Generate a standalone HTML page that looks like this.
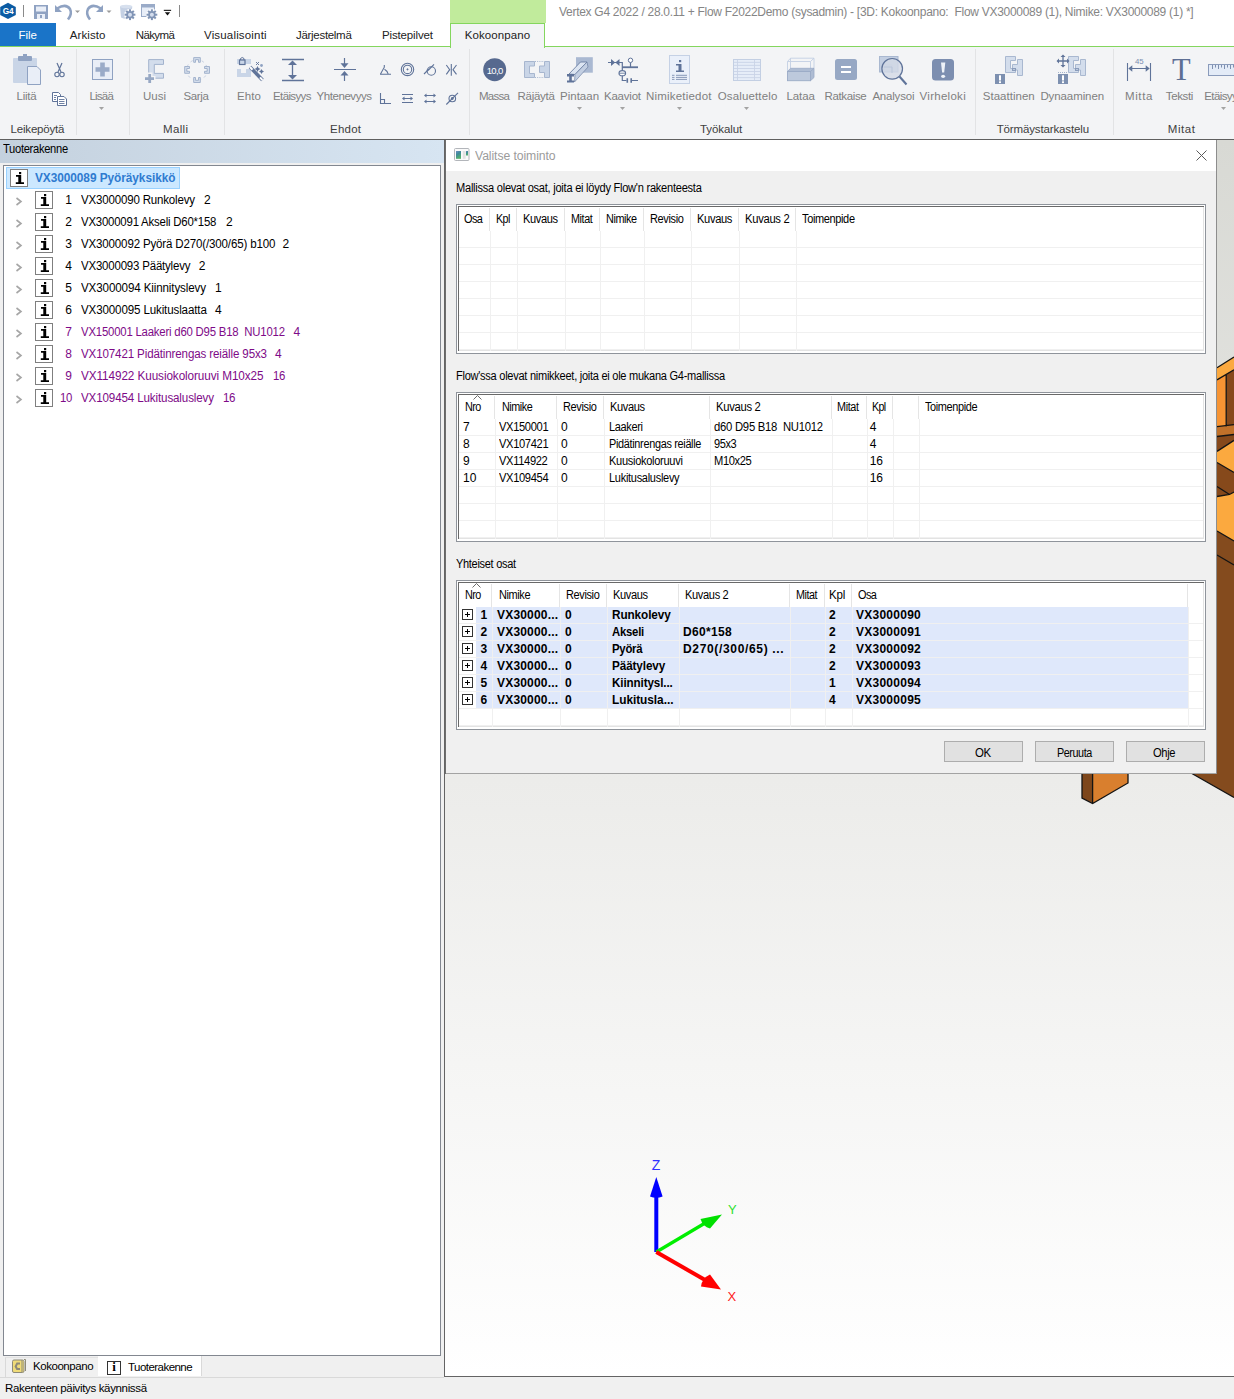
<!DOCTYPE html><html><head><meta charset="utf-8"><style>
html,body{margin:0;padding:0;}
body{width:1234px;height:1399px;position:relative;overflow:hidden;background:#f0f0f0;font-family:"Liberation Sans",sans-serif;}
svg{overflow:visible}
</style></head><body>
<div style="position:absolute;left:0px;top:0px;width:1234px;height:23px;background:#ffffff;"></div>
<div style="position:absolute;left:450px;top:0px;width:96px;height:23px;background:#c1eb9c;"></div>
<div style="position:absolute;left:559.00px;top:5.72px;font-size:12px;line-height:1;white-space:pre;color:#858585;letter-spacing:-0.286px;">Vertex G4 2022 / 28.0.11 + Flow F2022Demo (sysadmin) - [3D: Kokoonpano:  Flow VX3000089 (1), Nimike: VX3000089 (1) *]</div>
<div style="position:absolute;left:0px;top:23px;width:1234px;height:24px;background:#ffffff;"></div>
<div style="position:absolute;left:0px;top:23px;width:56px;height:23px;background:#1a74c8;"></div>
<div style="position:absolute;left:0px;top:46px;width:1234px;height:93px;background:#f3f4f6;"></div>
<div style="position:absolute;left:0px;top:46px;width:450px;height:1px;background:#84d65e;"></div>
<div style="position:absolute;left:545px;top:46px;width:689px;height:1px;background:#84d65e;"></div>
<div style="position:absolute;left:450px;top:23px;width:93px;height:24px;border:1px solid #84d65e;border-bottom:none;background:#f3f4f6;"></div>
<div style="position:absolute;left:0px;top:139px;width:1234px;height:1px;background:#5f5f5f;"></div>
<div style="position:absolute;left:18.60px;top:30.24px;font-size:11.5px;line-height:1;white-space:pre;color:#ffffff;letter-spacing:-0.049px;">File</div>
<div style="position:absolute;left:69.80px;top:30.24px;font-size:11.5px;line-height:1;white-space:pre;color:#222;letter-spacing:0.093px;">Arkisto</div>
<div style="position:absolute;left:135.70px;top:30.24px;font-size:11.5px;line-height:1;white-space:pre;color:#222;letter-spacing:-0.597px;">Näkymä</div>
<div style="position:absolute;left:204.00px;top:30.24px;font-size:11.5px;line-height:1;white-space:pre;color:#222;letter-spacing:0.172px;">Visualisointi</div>
<div style="position:absolute;left:296.00px;top:30.24px;font-size:11.5px;line-height:1;white-space:pre;color:#222;letter-spacing:-0.300px;">Järjestelmä</div>
<div style="position:absolute;left:382.00px;top:30.24px;font-size:11.5px;line-height:1;white-space:pre;color:#222;letter-spacing:-0.141px;">Pistepilvet</div>
<div style="position:absolute;left:464.80px;top:30.24px;font-size:11.5px;line-height:1;white-space:pre;color:#222;letter-spacing:0.073px;">Kokoonpano</div>
<div style="position:absolute;left:16.50px;top:91.04px;font-size:11.5px;line-height:1;white-space:pre;color:#808080;letter-spacing:-0.252px;">Liitä</div>
<div style="position:absolute;left:89.50px;top:91.04px;font-size:11.5px;line-height:1;white-space:pre;color:#808080;letter-spacing:-0.800px;">Lisää</div>
<div style="position:absolute;left:143.00px;top:91.04px;font-size:11.5px;line-height:1;white-space:pre;color:#808080;letter-spacing:-0.005px;">Uusi</div>
<div style="position:absolute;left:183.40px;top:91.04px;font-size:11.5px;line-height:1;white-space:pre;color:#808080;letter-spacing:-0.315px;">Sarja</div>
<div style="position:absolute;left:237.00px;top:91.04px;font-size:11.5px;line-height:1;white-space:pre;color:#808080;letter-spacing:0.120px;">Ehto</div>
<div style="position:absolute;left:273.00px;top:91.04px;font-size:11.5px;line-height:1;white-space:pre;color:#808080;letter-spacing:-0.616px;">Etäisyys</div>
<div style="position:absolute;left:316.60px;top:91.04px;font-size:11.5px;line-height:1;white-space:pre;color:#808080;letter-spacing:-0.447px;">Yhtenevyys</div>
<div style="position:absolute;left:479.00px;top:91.04px;font-size:11.5px;line-height:1;white-space:pre;color:#808080;letter-spacing:-0.719px;">Massa</div>
<div style="position:absolute;left:517.60px;top:91.04px;font-size:11.5px;line-height:1;white-space:pre;color:#808080;letter-spacing:-0.300px;">Räjäytä</div>
<div style="position:absolute;left:560.00px;top:91.04px;font-size:11.5px;line-height:1;white-space:pre;color:#808080;letter-spacing:0.003px;">Pintaan</div>
<div style="position:absolute;left:604.00px;top:91.04px;font-size:11.5px;line-height:1;white-space:pre;color:#808080;letter-spacing:-0.224px;">Kaaviot</div>
<div style="position:absolute;left:646.00px;top:91.04px;font-size:11.5px;line-height:1;white-space:pre;color:#808080;letter-spacing:0.203px;">Nimiketiedot</div>
<div style="position:absolute;left:717.70px;top:91.04px;font-size:11.5px;line-height:1;white-space:pre;color:#808080;letter-spacing:0.146px;">Osaluettelo</div>
<div style="position:absolute;left:786.50px;top:91.04px;font-size:11.5px;line-height:1;white-space:pre;color:#808080;letter-spacing:-0.116px;">Lataa</div>
<div style="position:absolute;left:824.60px;top:91.04px;font-size:11.5px;line-height:1;white-space:pre;color:#808080;letter-spacing:-0.376px;">Ratkaise</div>
<div style="position:absolute;left:872.40px;top:91.04px;font-size:11.5px;line-height:1;white-space:pre;color:#808080;letter-spacing:-0.196px;">Analysoi</div>
<div style="position:absolute;left:919.60px;top:91.04px;font-size:11.5px;line-height:1;white-space:pre;color:#808080;letter-spacing:0.274px;">Virheloki</div>
<div style="position:absolute;left:982.80px;top:91.04px;font-size:11.5px;line-height:1;white-space:pre;color:#808080;letter-spacing:0.017px;">Staattinen</div>
<div style="position:absolute;left:1040.40px;top:91.04px;font-size:11.5px;line-height:1;white-space:pre;color:#808080;letter-spacing:-0.094px;">Dynaaminen</div>
<div style="position:absolute;left:1125.00px;top:91.04px;font-size:11.5px;line-height:1;white-space:pre;color:#808080;letter-spacing:0.620px;">Mitta</div>
<div style="position:absolute;left:1165.80px;top:91.04px;font-size:11.5px;line-height:1;white-space:pre;color:#808080;letter-spacing:-0.371px;">Teksti</div>
<div style="position:absolute;left:1204.30px;top:91.04px;font-size:11.5px;line-height:1;white-space:pre;color:#808080;letter-spacing:-0.616px;">Etäisyys</div>
<div style="position:absolute;left:10.50px;top:124.24px;font-size:11.5px;line-height:1;white-space:pre;color:#404040;letter-spacing:-0.179px;">Leikepöytä</div>
<div style="position:absolute;left:163.00px;top:124.24px;font-size:11.5px;line-height:1;white-space:pre;color:#404040;letter-spacing:0.336px;">Malli</div>
<div style="position:absolute;left:330.00px;top:124.24px;font-size:11.5px;line-height:1;white-space:pre;color:#404040;letter-spacing:0.242px;">Ehdot</div>
<div style="position:absolute;left:700.00px;top:124.24px;font-size:11.5px;line-height:1;white-space:pre;color:#404040;letter-spacing:-0.077px;">Työkalut</div>
<div style="position:absolute;left:996.70px;top:124.24px;font-size:11.5px;line-height:1;white-space:pre;color:#404040;letter-spacing:-0.140px;">Törmäystarkastelu</div>
<div style="position:absolute;left:1167.80px;top:124.24px;font-size:11.5px;line-height:1;white-space:pre;color:#404040;letter-spacing:0.573px;">Mitat</div>
<div style="position:absolute;left:76px;top:49px;width:1px;height:86px;background:#e2e3e5;"></div>
<div style="position:absolute;left:129px;top:49px;width:1px;height:86px;background:#e2e3e5;"></div>
<div style="position:absolute;left:224px;top:49px;width:1px;height:86px;background:#e2e3e5;"></div>
<div style="position:absolute;left:469px;top:49px;width:1px;height:86px;background:#e2e3e5;"></div>
<div style="position:absolute;left:975px;top:49px;width:1px;height:86px;background:#e2e3e5;"></div>
<div style="position:absolute;left:1113px;top:49px;width:1px;height:86px;background:#e2e3e5;"></div>
<svg style="position:absolute;left:99.0px;top:107px;" width="5" height="3" viewBox="0 0 5 3"><path d="M0 0H5L2.5 3Z" fill="#a3a3a3"/></svg>
<svg style="position:absolute;left:577.0px;top:107px;" width="5" height="3" viewBox="0 0 5 3"><path d="M0 0H5L2.5 3Z" fill="#a3a3a3"/></svg>
<svg style="position:absolute;left:619.5px;top:107px;" width="5" height="3" viewBox="0 0 5 3"><path d="M0 0H5L2.5 3Z" fill="#a3a3a3"/></svg>
<svg style="position:absolute;left:676.5px;top:107px;" width="5" height="3" viewBox="0 0 5 3"><path d="M0 0H5L2.5 3Z" fill="#a3a3a3"/></svg>
<svg style="position:absolute;left:743.5px;top:107px;" width="5" height="3" viewBox="0 0 5 3"><path d="M0 0H5L2.5 3Z" fill="#a3a3a3"/></svg>
<svg style="position:absolute;left:1221.0px;top:107px;" width="5" height="3" viewBox="0 0 5 3"><path d="M0 0H5L2.5 3Z" fill="#a3a3a3"/></svg>
<div style="position:absolute;left:0;top:140px;width:444px;height:23px;background:linear-gradient(to right,#c4d1de,#d7e5f2);"></div>
<div style="position:absolute;left:3.00px;top:142.62px;font-size:12px;line-height:1;white-space:pre;color:#000;letter-spacing:-0.322px;transform:scaleX(0.9292);transform-origin:0 0;">Tuoterakenne</div>
<div style="position:absolute;left:3px;top:165px;width:436px;height:1189px;border:1px solid #828790;background:#fff;"></div>
<div style="position:absolute;left:6px;top:167px;width:172px;height:20px;border:1px solid #99d1ff;background:#cce8ff;"></div>
<svg style="position:absolute;left:10px;top:169px;" width="18" height="18" viewBox="0 0 18 18"><rect x="0.5" y="0.5" width="17" height="17" fill="#fff" stroke="#7f7f7f"/><rect x="9" y="3" width="2.2" height="2.2" fill="#000"/><path d="M6 6H11.2V13.2H14V15H5.8V13.2H8.3V7.7H6Z" fill="#000"/></svg>
<div style="position:absolute;left:35.40px;top:171.62px;font-size:12px;line-height:1;white-space:pre;color:#2f7bd0;font-weight:bold;letter-spacing:-0.057px;transform:scaleX(0.9874);transform-origin:0 0;">VX3000089 Pyöräyksikkö</div>
<svg style="position:absolute;left:15px;top:197px;" width="8" height="10" viewBox="0 0 8 10"><path d="M1.5 1L6 4.5L1.5 8" fill="none" stroke="#a6a6a6" stroke-width="1.6"/></svg>
<svg style="position:absolute;left:35px;top:191px;" width="18" height="18" viewBox="0 0 18 18"><rect x="0.5" y="0.5" width="17" height="17" fill="#fff" stroke="#7f7f7f"/><rect x="9" y="3" width="2.2" height="2.2" fill="#000"/><path d="M6 6H11.2V13.2H14V15H5.8V13.2H8.3V7.7H6Z" fill="#000"/></svg>
<div style="position:absolute;left:65.13px;top:194.12px;font-size:12px;line-height:1;white-space:pre;color:#000;">1</div>
<div style="position:absolute;left:81.00px;top:194.12px;font-size:12px;line-height:1;white-space:pre;color:#000;letter-spacing:-0.183px;transform:scaleX(0.9598);transform-origin:0 0;">VX3000090 Runkolevy</div>
<div style="position:absolute;left:204.00px;top:194.12px;font-size:12px;line-height:1;white-space:pre;color:#000;">2</div>
<svg style="position:absolute;left:15px;top:219px;" width="8" height="10" viewBox="0 0 8 10"><path d="M1.5 1L6 4.5L1.5 8" fill="none" stroke="#a6a6a6" stroke-width="1.6"/></svg>
<svg style="position:absolute;left:35px;top:213px;" width="18" height="18" viewBox="0 0 18 18"><rect x="0.5" y="0.5" width="17" height="17" fill="#fff" stroke="#7f7f7f"/><rect x="9" y="3" width="2.2" height="2.2" fill="#000"/><path d="M6 6H11.2V13.2H14V15H5.8V13.2H8.3V7.7H6Z" fill="#000"/></svg>
<div style="position:absolute;left:65.13px;top:216.12px;font-size:12px;line-height:1;white-space:pre;color:#000;">2</div>
<div style="position:absolute;left:81.00px;top:216.12px;font-size:12px;line-height:1;white-space:pre;color:#000;letter-spacing:-0.215px;transform:scaleX(0.9503);transform-origin:0 0;">VX3000091 Akseli D60*158</div>
<div style="position:absolute;left:226.00px;top:216.12px;font-size:12px;line-height:1;white-space:pre;color:#000;">2</div>
<svg style="position:absolute;left:15px;top:241px;" width="8" height="10" viewBox="0 0 8 10"><path d="M1.5 1L6 4.5L1.5 8" fill="none" stroke="#a6a6a6" stroke-width="1.6"/></svg>
<svg style="position:absolute;left:35px;top:235px;" width="18" height="18" viewBox="0 0 18 18"><rect x="0.5" y="0.5" width="17" height="17" fill="#fff" stroke="#7f7f7f"/><rect x="9" y="3" width="2.2" height="2.2" fill="#000"/><path d="M6 6H11.2V13.2H14V15H5.8V13.2H8.3V7.7H6Z" fill="#000"/></svg>
<div style="position:absolute;left:65.13px;top:238.12px;font-size:12px;line-height:1;white-space:pre;color:#000;">3</div>
<div style="position:absolute;left:81.00px;top:238.12px;font-size:12px;line-height:1;white-space:pre;color:#000;letter-spacing:-0.162px;transform:scaleX(0.9615);transform-origin:0 0;">VX3000092 Pyörä D270(/300/65) b100</div>
<div style="position:absolute;left:282.60px;top:238.12px;font-size:12px;line-height:1;white-space:pre;color:#000;">2</div>
<svg style="position:absolute;left:15px;top:263px;" width="8" height="10" viewBox="0 0 8 10"><path d="M1.5 1L6 4.5L1.5 8" fill="none" stroke="#a6a6a6" stroke-width="1.6"/></svg>
<svg style="position:absolute;left:35px;top:257px;" width="18" height="18" viewBox="0 0 18 18"><rect x="0.5" y="0.5" width="17" height="17" fill="#fff" stroke="#7f7f7f"/><rect x="9" y="3" width="2.2" height="2.2" fill="#000"/><path d="M6 6H11.2V13.2H14V15H5.8V13.2H8.3V7.7H6Z" fill="#000"/></svg>
<div style="position:absolute;left:65.13px;top:260.12px;font-size:12px;line-height:1;white-space:pre;color:#000;">4</div>
<div style="position:absolute;left:81.00px;top:260.12px;font-size:12px;line-height:1;white-space:pre;color:#000;letter-spacing:-0.197px;transform:scaleX(0.9554);transform-origin:0 0;">VX3000093 Päätylevy</div>
<div style="position:absolute;left:198.80px;top:260.12px;font-size:12px;line-height:1;white-space:pre;color:#000;">2</div>
<svg style="position:absolute;left:15px;top:285px;" width="8" height="10" viewBox="0 0 8 10"><path d="M1.5 1L6 4.5L1.5 8" fill="none" stroke="#a6a6a6" stroke-width="1.6"/></svg>
<svg style="position:absolute;left:35px;top:279px;" width="18" height="18" viewBox="0 0 18 18"><rect x="0.5" y="0.5" width="17" height="17" fill="#fff" stroke="#7f7f7f"/><rect x="9" y="3" width="2.2" height="2.2" fill="#000"/><path d="M6 6H11.2V13.2H14V15H5.8V13.2H8.3V7.7H6Z" fill="#000"/></svg>
<div style="position:absolute;left:65.13px;top:282.12px;font-size:12px;line-height:1;white-space:pre;color:#000;">5</div>
<div style="position:absolute;left:81.00px;top:282.12px;font-size:12px;line-height:1;white-space:pre;color:#000;letter-spacing:-0.131px;transform:scaleX(0.9676);transform-origin:0 0;">VX3000094 Kiinnityslevy</div>
<div style="position:absolute;left:215.00px;top:282.12px;font-size:12px;line-height:1;white-space:pre;color:#000;">1</div>
<svg style="position:absolute;left:15px;top:307px;" width="8" height="10" viewBox="0 0 8 10"><path d="M1.5 1L6 4.5L1.5 8" fill="none" stroke="#a6a6a6" stroke-width="1.6"/></svg>
<svg style="position:absolute;left:35px;top:301px;" width="18" height="18" viewBox="0 0 18 18"><rect x="0.5" y="0.5" width="17" height="17" fill="#fff" stroke="#7f7f7f"/><rect x="9" y="3" width="2.2" height="2.2" fill="#000"/><path d="M6 6H11.2V13.2H14V15H5.8V13.2H8.3V7.7H6Z" fill="#000"/></svg>
<div style="position:absolute;left:65.13px;top:304.12px;font-size:12px;line-height:1;white-space:pre;color:#000;">6</div>
<div style="position:absolute;left:81.00px;top:304.12px;font-size:12px;line-height:1;white-space:pre;color:#000;letter-spacing:-0.141px;transform:scaleX(0.9654);transform-origin:0 0;">VX3000095 Lukituslaatta</div>
<div style="position:absolute;left:215.00px;top:304.12px;font-size:12px;line-height:1;white-space:pre;color:#000;">4</div>
<svg style="position:absolute;left:15px;top:329px;" width="8" height="10" viewBox="0 0 8 10"><path d="M1.5 1L6 4.5L1.5 8" fill="none" stroke="#a6a6a6" stroke-width="1.6"/></svg>
<svg style="position:absolute;left:35px;top:323px;" width="18" height="18" viewBox="0 0 18 18"><rect x="0.5" y="0.5" width="17" height="17" fill="#fff" stroke="#7f7f7f"/><rect x="9" y="3" width="2.2" height="2.2" fill="#000"/><path d="M6 6H11.2V13.2H14V15H5.8V13.2H8.3V7.7H6Z" fill="#000"/></svg>
<div style="position:absolute;left:65.13px;top:326.12px;font-size:12px;line-height:1;white-space:pre;color:#7e0a88;">7</div>
<div style="position:absolute;left:81.00px;top:326.12px;font-size:12px;line-height:1;white-space:pre;color:#7e0a88;letter-spacing:-0.220px;transform:scaleX(0.9486);transform-origin:0 0;">VX150001 Laakeri d60 D95 B18  NU1012</div>
<div style="position:absolute;left:293.60px;top:326.12px;font-size:12px;line-height:1;white-space:pre;color:#7e0a88;">4</div>
<svg style="position:absolute;left:15px;top:351px;" width="8" height="10" viewBox="0 0 8 10"><path d="M1.5 1L6 4.5L1.5 8" fill="none" stroke="#a6a6a6" stroke-width="1.6"/></svg>
<svg style="position:absolute;left:35px;top:345px;" width="18" height="18" viewBox="0 0 18 18"><rect x="0.5" y="0.5" width="17" height="17" fill="#fff" stroke="#7f7f7f"/><rect x="9" y="3" width="2.2" height="2.2" fill="#000"/><path d="M6 6H11.2V13.2H14V15H5.8V13.2H8.3V7.7H6Z" fill="#000"/></svg>
<div style="position:absolute;left:65.13px;top:348.12px;font-size:12px;line-height:1;white-space:pre;color:#7e0a88;">8</div>
<div style="position:absolute;left:81.00px;top:348.12px;font-size:12px;line-height:1;white-space:pre;color:#7e0a88;letter-spacing:-0.137px;transform:scaleX(0.9648);transform-origin:0 0;">VX107421 Pidätinrengas reiälle 95x3</div>
<div style="position:absolute;left:275.00px;top:348.12px;font-size:12px;line-height:1;white-space:pre;color:#7e0a88;">4</div>
<svg style="position:absolute;left:15px;top:373px;" width="8" height="10" viewBox="0 0 8 10"><path d="M1.5 1L6 4.5L1.5 8" fill="none" stroke="#a6a6a6" stroke-width="1.6"/></svg>
<svg style="position:absolute;left:35px;top:367px;" width="18" height="18" viewBox="0 0 18 18"><rect x="0.5" y="0.5" width="17" height="17" fill="#fff" stroke="#7f7f7f"/><rect x="9" y="3" width="2.2" height="2.2" fill="#000"/><path d="M6 6H11.2V13.2H14V15H5.8V13.2H8.3V7.7H6Z" fill="#000"/></svg>
<div style="position:absolute;left:65.13px;top:370.12px;font-size:12px;line-height:1;white-space:pre;color:#7e0a88;">9</div>
<div style="position:absolute;left:81.00px;top:370.12px;font-size:12px;line-height:1;white-space:pre;color:#7e0a88;letter-spacing:-0.090px;transform:scaleX(0.9788);transform-origin:0 0;">VX114922 Kuusiokoloruuvi M10x25</div>
<div style="position:absolute;left:272.80px;top:370.12px;font-size:12px;line-height:1;white-space:pre;color:#7e0a88;letter-spacing:-0.470px;transform:scaleX(0.9477);transform-origin:0 0;">16</div>
<svg style="position:absolute;left:15px;top:395px;" width="8" height="10" viewBox="0 0 8 10"><path d="M1.5 1L6 4.5L1.5 8" fill="none" stroke="#a6a6a6" stroke-width="1.6"/></svg>
<svg style="position:absolute;left:35px;top:389px;" width="18" height="18" viewBox="0 0 18 18"><rect x="0.5" y="0.5" width="17" height="17" fill="#fff" stroke="#7f7f7f"/><rect x="9" y="3" width="2.2" height="2.2" fill="#000"/><path d="M6 6H11.2V13.2H14V15H5.8V13.2H8.3V7.7H6Z" fill="#000"/></svg>
<div style="position:absolute;left:60.00px;top:392.12px;font-size:12px;line-height:1;white-space:pre;color:#7e0a88;letter-spacing:-0.470px;transform:scaleX(0.9477);transform-origin:0 0;">10</div>
<div style="position:absolute;left:81.00px;top:392.12px;font-size:12px;line-height:1;white-space:pre;color:#7e0a88;letter-spacing:-0.137px;transform:scaleX(0.9667);transform-origin:0 0;">VX109454 Lukitusaluslevy</div>
<div style="position:absolute;left:222.50px;top:392.12px;font-size:12px;line-height:1;white-space:pre;color:#7e0a88;letter-spacing:-0.344px;transform:scaleX(0.9616);transform-origin:0 0;">16</div>
<div style="position:absolute;left:0px;top:1356px;width:444px;height:21px;background:#f0f0f0;"></div>
<div style="position:absolute;left:5px;top:1357px;width:92px;height:19px;border-left:1px solid #d9d9d9;border-top:1px solid #e3e3e3;background:#f0f0f0;"></div>
<div style="position:absolute;left:98px;top:1356px;width:103px;height:20px;border-right:1px solid #d9d9d9;background:#fff;"></div>
<svg style="position:absolute;left:12px;top:1359px;" width="14" height="14" viewBox="0 0 14 14"><rect x="0.5" y="1" width="11.5" height="12.5" rx="1.5" fill="#efdb78" stroke="#8d8a78"/><path d="M10 1V13" stroke="#8d8a78"/><path d="M12 0.5H13.5V12" fill="none" stroke="#8d8a78"/><path d="M8 3.5H4.5L2.5 7.5L4.5 11H8V9H5.8L4.8 7.5L5.8 5.5H8Z" fill="#8d8a78"/></svg>
<div style="position:absolute;left:33.00px;top:1360.84px;font-size:11.5px;line-height:1;white-space:pre;color:#000;letter-spacing:-0.450px;">Kokoonpano</div>
<div style="position:absolute;left:107px;top:1361px;width:12px;height:12px;border:1px solid #333;background:#fff;"></div>
<div style="position:absolute;left:107px;top:1360px;width:14px;text-align:center;font:bold 13px/1 'Liberation Serif';color:#000;">i</div>
<div style="position:absolute;left:128.00px;top:1362.34px;font-size:11.5px;line-height:1;white-space:pre;color:#000;letter-spacing:-0.538px;">Tuoterakenne</div>
<div style="position:absolute;left:0px;top:1377px;width:444px;height:1px;background:#d9d9d9;"></div>
<div style="position:absolute;left:5.00px;top:1382.94px;font-size:11.5px;line-height:1;white-space:pre;color:#000;letter-spacing:-0.350px;">Rakenteen päivitys käynnissä</div>
<div style="position:absolute;left:444px;top:140px;width:790px;height:1236px;border-left:1px solid #646464;border-bottom:1px solid #646464;background:linear-gradient(to bottom,#d8d9d4 0px,#ececea 640px,#ffffff 1236px);"></div>
<svg style="position:absolute;left:0;top:0" width="1234" height="1399" viewBox="0 0 1234 1399"><polygon points="1217,367.7 1234,357 1234,369.7 1217,379.9" fill="#fba93f"/><polygon points="1217,379.9 1226.2,374.2 1226.2,426.4 1217,426.6" fill="#f79433"/><polygon points="1226.2,374.2 1234,369.7 1234,424.7 1226.2,426.4" fill="#86491b"/><polygon points="1217,426.6 1234,424.7 1234,434.5 1217,436.5" fill="#c0712a"/><polygon points="1217,436.5 1234,434.5 1234,440.4 1217,451.4" fill="#86491b"/><polygon points="1217,451.4 1234,440.4 1234,472.5 1217,462.5" fill="#fba93f"/><polygon points="1217,462.5 1234,472.5 1234,492 1229.5,494.5 1217,496.5" fill="#86491b"/><polygon points="1217,496.5 1229.5,494.5 1234,492 1234,541 1217,531" fill="#fba93f"/><polygon points="1217,531 1234,541 1234,797.5 1191,773 1217,773" fill="#844b1e"/><polygon points="1082,773 1092.6,773 1092.6,803.5 1082,798" fill="#7d461b"/><polygon points="1092.6,773 1128,773 1128,783 1092.6,803.5" fill="#d97f2e"/><path d="M1217 367.7L1234 357M1217 379.9L1234 369.7M1226.2 374.2V426.4M1217 426.6L1234 424.7M1217 436.5L1234 434.5M1217 451.4L1234 440.4M1217 462.5L1234 472.5M1217 486.5L1229.5 494.5M1217 496.5L1229.5 494.5L1234 492M1217 531L1234 541M1217 555L1234 565M1191 773L1234 797.5M1082 773V798L1092.6 803.5L1128 783V773M1092.6 773V803.5" fill="none" stroke="#141414" stroke-width="1.3"/></svg>
<svg style="position:absolute;left:0;top:0" width="1234" height="1399" viewBox="0 0 1234 1399"><line x1="656.3" y1="1252" x2="656.3" y2="1196" stroke="#0000ff" stroke-width="4"/><path d="M656.3 1177L650 1196.5Q656.3 1199 662.6 1196.5Z" fill="#0000ff"/><line x1="656.3" y1="1252" x2="706" y2="1222.5" stroke="#00ee00" stroke-width="3.2"/><path d="M722 1214.5L700.5 1219Q703 1227 710 1228.5Z" fill="#00e000"/><line x1="656.3" y1="1252" x2="706" y2="1280.5" stroke="#ff0000" stroke-width="4"/><path d="M721 1289.5L710 1274.5Q702 1278 701 1286.5Z" fill="#ff0000"/></svg>
<div style="position:absolute;left:651.8px;top:1157.6px;font:14px/1 'Liberation Sans';color:#3030ff;">Z</div>
<div style="position:absolute;left:728px;top:1202.5px;font:13px/1 'Liberation Sans';color:#30e030;">Y</div>
<div style="position:absolute;left:727.5px;top:1289.5px;font:13px/1 'Liberation Sans';color:#ff2020;">X</div>
<div style="position:absolute;left:445px;top:140px;width:771px;height:31px;background:#ffffff;"></div>
<div style="position:absolute;left:445px;top:171px;width:771px;height:602px;background:#f0f0f0;"></div>
<div style="position:absolute;left:445px;top:773px;width:772px;height:1px;background:#a3a3a3;"></div>
<div style="position:absolute;left:1216px;top:140px;width:1px;height:634px;background:#8d8d8d;"></div>
<div style="position:absolute;left:445px;top:140px;width:1px;height:634px;background:#6e6e6e;"></div>
<svg style="position:absolute;left:454px;top:148px;" width="16" height="13" viewBox="0 0 16 13"><defs><linearGradient id="tg" x1="0" y1="0" x2="0.4" y2="1"><stop offset="0" stop-color="#6d8ec4"/><stop offset="0.45" stop-color="#3f8a98"/><stop offset="1" stop-color="#52b06a"/></linearGradient></defs><rect x="0.5" y="0.5" width="14.5" height="12" rx="1" fill="#fafafa" stroke="#b2b5ba"/><rect x="2" y="3" width="5" height="7.8" fill="url(#tg)"/><rect x="8.8" y="3" width="2.8" height="7.8" fill="#e2e2e2"/><rect x="12" y="3" width="2" height="4.5" fill="url(#tg)"/></svg>
<div style="position:absolute;left:475.00px;top:149.70px;font-size:12.5px;line-height:1;white-space:pre;color:#9b9b9b;letter-spacing:-0.088px;transform:scaleX(0.9768);transform-origin:0 0;">Valitse toiminto</div>
<svg style="position:absolute;left:1196px;top:150px;" width="11" height="11" viewBox="0 0 11 11"><path d="M0.5 0.5L10.5 10.5M10.5 0.5L0.5 10.5" stroke="#5a5a5a" stroke-width="1"/></svg>
<div style="position:absolute;left:456.20px;top:182.02px;font-size:12px;line-height:1;white-space:pre;color:#000;letter-spacing:-0.272px;transform:scaleX(0.9227);transform-origin:0 0;">Mallissa olevat osat, joita ei löydy Flow'n rakenteesta</div>
<div style="position:absolute;left:456.20px;top:370.22px;font-size:12px;line-height:1;white-space:pre;color:#000;letter-spacing:-0.292px;transform:scaleX(0.9203);transform-origin:0 0;">Flow'ssa olevat nimikkeet, joita ei ole mukana G4-mallissa</div>
<div style="position:absolute;left:456.20px;top:557.72px;font-size:12px;line-height:1;white-space:pre;color:#000;letter-spacing:-0.325px;transform:scaleX(0.9168);transform-origin:0 0;">Yhteiset osat</div>
<div style="position:absolute;left:456px;top:204px;width:748px;height:148px;border:1px solid #8f949b;background:#fff;"></div>
<div style="position:absolute;left:458px;top:206px;width:1px;height:145px;background:#696969;"></div>
<div style="position:absolute;left:458px;top:206px;width:746px;height:1px;background:#696969;"></div>
<div style="position:absolute;left:459px;top:350px;width:745px;height:1px;background:#e3e3e3;"></div>
<div style="position:absolute;left:1203px;top:207px;width:1px;height:144px;background:#e3e3e3;"></div>
<div style="position:absolute;left:489px;top:208px;width:1px;height:23px;background:#e5e5e5;"></div>
<div style="position:absolute;left:516px;top:208px;width:1px;height:23px;background:#e5e5e5;"></div>
<div style="position:absolute;left:564px;top:208px;width:1px;height:23px;background:#e5e5e5;"></div>
<div style="position:absolute;left:599px;top:208px;width:1px;height:23px;background:#e5e5e5;"></div>
<div style="position:absolute;left:643px;top:208px;width:1px;height:23px;background:#e5e5e5;"></div>
<div style="position:absolute;left:690px;top:208px;width:1px;height:23px;background:#e5e5e5;"></div>
<div style="position:absolute;left:738px;top:208px;width:1px;height:23px;background:#e5e5e5;"></div>
<div style="position:absolute;left:795px;top:208px;width:1px;height:23px;background:#e5e5e5;"></div>
<div style="position:absolute;left:490px;top:231px;width:1px;height:120px;background:#f0f0f0;"></div>
<div style="position:absolute;left:517px;top:231px;width:1px;height:120px;background:#f0f0f0;"></div>
<div style="position:absolute;left:565px;top:231px;width:1px;height:120px;background:#f0f0f0;"></div>
<div style="position:absolute;left:600px;top:231px;width:1px;height:120px;background:#f0f0f0;"></div>
<div style="position:absolute;left:644px;top:231px;width:1px;height:120px;background:#f0f0f0;"></div>
<div style="position:absolute;left:691px;top:231px;width:1px;height:120px;background:#f0f0f0;"></div>
<div style="position:absolute;left:739px;top:231px;width:1px;height:120px;background:#f0f0f0;"></div>
<div style="position:absolute;left:796px;top:231px;width:1px;height:120px;background:#f0f0f0;"></div>
<div style="position:absolute;left:459px;top:247px;width:744px;height:1px;background:#f0f0f0;"></div>
<div style="position:absolute;left:459px;top:264px;width:744px;height:1px;background:#f0f0f0;"></div>
<div style="position:absolute;left:459px;top:281px;width:744px;height:1px;background:#f0f0f0;"></div>
<div style="position:absolute;left:459px;top:298px;width:744px;height:1px;background:#f0f0f0;"></div>
<div style="position:absolute;left:459px;top:315px;width:744px;height:1px;background:#f0f0f0;"></div>
<div style="position:absolute;left:459px;top:332px;width:744px;height:1px;background:#f0f0f0;"></div>
<div style="position:absolute;left:459px;top:349px;width:744px;height:1px;background:#f0f0f0;"></div>
<div style="position:absolute;left:464.30px;top:213.12px;font-size:12px;line-height:1;white-space:pre;color:#000;letter-spacing:-0.674px;transform:scaleX(0.9096);transform-origin:0 0;">Osa</div>
<div style="position:absolute;left:496.00px;top:213.12px;font-size:12px;line-height:1;white-space:pre;color:#000;letter-spacing:-0.644px;transform:scaleX(0.8907);transform-origin:0 0;">Kpl</div>
<div style="position:absolute;left:523.30px;top:213.12px;font-size:12px;line-height:1;white-space:pre;color:#000;letter-spacing:-0.417px;transform:scaleX(0.9228);transform-origin:0 0;">Kuvaus</div>
<div style="position:absolute;left:571.30px;top:213.12px;font-size:12px;line-height:1;white-space:pre;color:#000;letter-spacing:-0.453px;transform:scaleX(0.8972);transform-origin:0 0;">Mitat</div>
<div style="position:absolute;left:606.00px;top:213.12px;font-size:12px;line-height:1;white-space:pre;color:#000;letter-spacing:-0.478px;transform:scaleX(0.9039);transform-origin:0 0;">Nimike</div>
<div style="position:absolute;left:650.00px;top:213.12px;font-size:12px;line-height:1;white-space:pre;color:#000;letter-spacing:-0.373px;transform:scaleX(0.9159);transform-origin:0 0;">Revisio</div>
<div style="position:absolute;left:697.00px;top:213.12px;font-size:12px;line-height:1;white-space:pre;color:#000;letter-spacing:-0.383px;transform:scaleX(0.9291);transform-origin:0 0;">Kuvaus</div>
<div style="position:absolute;left:745.30px;top:213.12px;font-size:12px;line-height:1;white-space:pre;color:#000;letter-spacing:-0.314px;transform:scaleX(0.9348);transform-origin:0 0;">Kuvaus 2</div>
<div style="position:absolute;left:802.00px;top:213.12px;font-size:12px;line-height:1;white-space:pre;color:#000;letter-spacing:-0.394px;transform:scaleX(0.9164);transform-origin:0 0;">Toimenpide</div>
<div style="position:absolute;left:456px;top:392px;width:748px;height:148px;border:1px solid #8f949b;background:#fff;"></div>
<div style="position:absolute;left:458px;top:394px;width:1px;height:145px;background:#696969;"></div>
<div style="position:absolute;left:458px;top:394px;width:746px;height:1px;background:#696969;"></div>
<div style="position:absolute;left:459px;top:538px;width:745px;height:1px;background:#e3e3e3;"></div>
<div style="position:absolute;left:1203px;top:395px;width:1px;height:144px;background:#e3e3e3;"></div>
<div style="position:absolute;left:494px;top:396px;width:1px;height:23px;background:#e5e5e5;"></div>
<div style="position:absolute;left:556px;top:396px;width:1px;height:23px;background:#e5e5e5;"></div>
<div style="position:absolute;left:603px;top:396px;width:1px;height:23px;background:#e5e5e5;"></div>
<div style="position:absolute;left:709px;top:396px;width:1px;height:23px;background:#e5e5e5;"></div>
<div style="position:absolute;left:831px;top:396px;width:1px;height:23px;background:#e5e5e5;"></div>
<div style="position:absolute;left:866px;top:396px;width:1px;height:23px;background:#e5e5e5;"></div>
<div style="position:absolute;left:892px;top:396px;width:1px;height:23px;background:#e5e5e5;"></div>
<div style="position:absolute;left:918px;top:396px;width:1px;height:23px;background:#e5e5e5;"></div>
<div style="position:absolute;left:495px;top:419px;width:1px;height:120px;background:#f0f0f0;"></div>
<div style="position:absolute;left:557px;top:419px;width:1px;height:120px;background:#f0f0f0;"></div>
<div style="position:absolute;left:604px;top:419px;width:1px;height:120px;background:#f0f0f0;"></div>
<div style="position:absolute;left:710px;top:419px;width:1px;height:120px;background:#f0f0f0;"></div>
<div style="position:absolute;left:832px;top:419px;width:1px;height:120px;background:#f0f0f0;"></div>
<div style="position:absolute;left:867px;top:419px;width:1px;height:120px;background:#f0f0f0;"></div>
<div style="position:absolute;left:893px;top:419px;width:1px;height:120px;background:#f0f0f0;"></div>
<div style="position:absolute;left:919px;top:419px;width:1px;height:120px;background:#f0f0f0;"></div>
<div style="position:absolute;left:459px;top:435px;width:744px;height:1px;background:#f0f0f0;"></div>
<div style="position:absolute;left:459px;top:452px;width:744px;height:1px;background:#f0f0f0;"></div>
<div style="position:absolute;left:459px;top:469px;width:744px;height:1px;background:#f0f0f0;"></div>
<div style="position:absolute;left:459px;top:486px;width:744px;height:1px;background:#f0f0f0;"></div>
<div style="position:absolute;left:459px;top:503px;width:744px;height:1px;background:#f0f0f0;"></div>
<div style="position:absolute;left:459px;top:520px;width:744px;height:1px;background:#f0f0f0;"></div>
<div style="position:absolute;left:459px;top:537px;width:744px;height:1px;background:#f0f0f0;"></div>
<svg style="position:absolute;left:473px;top:395px;" width="9" height="5" viewBox="0 0 9 5"><path d="M0.5 4.5L4.5 0.5L8.5 4.5" fill="none" stroke="#6d6d6d"/></svg>
<div style="position:absolute;left:465.30px;top:401.12px;font-size:12px;line-height:1;white-space:pre;color:#000;letter-spacing:-0.662px;transform:scaleX(0.8991);transform-origin:0 0;">Nro</div>
<div style="position:absolute;left:501.60px;top:401.12px;font-size:12px;line-height:1;white-space:pre;color:#000;letter-spacing:-0.496px;transform:scaleX(0.9004);transform-origin:0 0;">Nimike</div>
<div style="position:absolute;left:563.20px;top:401.12px;font-size:12px;line-height:1;white-space:pre;color:#000;letter-spacing:-0.373px;transform:scaleX(0.9159);transform-origin:0 0;">Revisio</div>
<div style="position:absolute;left:610.20px;top:401.12px;font-size:12px;line-height:1;white-space:pre;color:#000;letter-spacing:-0.417px;transform:scaleX(0.9228);transform-origin:0 0;">Kuvaus</div>
<div style="position:absolute;left:716.20px;top:401.12px;font-size:12px;line-height:1;white-space:pre;color:#000;letter-spacing:-0.308px;transform:scaleX(0.9361);transform-origin:0 0;">Kuvaus 2</div>
<div style="position:absolute;left:837.40px;top:401.12px;font-size:12px;line-height:1;white-space:pre;color:#000;letter-spacing:-0.431px;transform:scaleX(0.9022);transform-origin:0 0;">Mitat</div>
<div style="position:absolute;left:872.00px;top:401.12px;font-size:12px;line-height:1;white-space:pre;color:#000;letter-spacing:-0.689px;transform:scaleX(0.8832);transform-origin:0 0;">Kpl</div>
<div style="position:absolute;left:924.70px;top:401.12px;font-size:12px;line-height:1;white-space:pre;color:#000;letter-spacing:-0.418px;transform:scaleX(0.9113);transform-origin:0 0;">Toimenpide</div>
<div style="position:absolute;left:463.00px;top:421.02px;font-size:12px;line-height:1;white-space:pre;color:#000;">7</div>
<div style="position:absolute;left:499.00px;top:421.02px;font-size:12px;line-height:1;white-space:pre;color:#000;letter-spacing:-0.381px;transform:scaleX(0.9295);transform-origin:0 0;">VX150001</div>
<div style="position:absolute;left:561.00px;top:421.02px;font-size:12px;line-height:1;white-space:pre;color:#000;">0</div>
<div style="position:absolute;left:608.60px;top:421.02px;font-size:12px;line-height:1;white-space:pre;color:#000;letter-spacing:-0.373px;transform:scaleX(0.9159);transform-origin:0 0;">Laakeri</div>
<div style="position:absolute;left:714.00px;top:421.02px;font-size:12px;line-height:1;white-space:pre;color:#000;letter-spacing:-0.268px;transform:scaleX(0.9406);transform-origin:0 0;">d60 D95 B18  NU1012</div>
<div style="position:absolute;left:869.70px;top:421.02px;font-size:12px;line-height:1;white-space:pre;color:#000;">4</div>
<div style="position:absolute;left:463.00px;top:438.02px;font-size:12px;line-height:1;white-space:pre;color:#000;">8</div>
<div style="position:absolute;left:499.00px;top:438.02px;font-size:12px;line-height:1;white-space:pre;color:#000;letter-spacing:-0.381px;transform:scaleX(0.9295);transform-origin:0 0;">VX107421</div>
<div style="position:absolute;left:561.00px;top:438.02px;font-size:12px;line-height:1;white-space:pre;color:#000;">0</div>
<div style="position:absolute;left:608.60px;top:438.02px;font-size:12px;line-height:1;white-space:pre;color:#000;letter-spacing:-0.343px;transform:scaleX(0.9069);transform-origin:0 0;">Pidätinrengas reiälle</div>
<div style="position:absolute;left:714.00px;top:438.02px;font-size:12px;line-height:1;white-space:pre;color:#000;letter-spacing:-0.475px;transform:scaleX(0.9190);transform-origin:0 0;">95x3</div>
<div style="position:absolute;left:869.70px;top:438.02px;font-size:12px;line-height:1;white-space:pre;color:#000;">4</div>
<div style="position:absolute;left:463.00px;top:455.02px;font-size:12px;line-height:1;white-space:pre;color:#000;">9</div>
<div style="position:absolute;left:499.00px;top:455.02px;font-size:12px;line-height:1;white-space:pre;color:#000;letter-spacing:-0.380px;transform:scaleX(0.9296);transform-origin:0 0;">VX114922</div>
<div style="position:absolute;left:561.00px;top:455.02px;font-size:12px;line-height:1;white-space:pre;color:#000;">0</div>
<div style="position:absolute;left:608.60px;top:455.02px;font-size:12px;line-height:1;white-space:pre;color:#000;letter-spacing:-0.322px;transform:scaleX(0.9213);transform-origin:0 0;">Kuusiokoloruuvi</div>
<div style="position:absolute;left:714.00px;top:455.02px;font-size:12px;line-height:1;white-space:pre;color:#000;letter-spacing:-0.405px;transform:scaleX(0.9296);transform-origin:0 0;">M10x25</div>
<div style="position:absolute;left:869.70px;top:455.02px;font-size:12px;line-height:1;white-space:pre;color:#000;">16</div>
<div style="position:absolute;left:463.00px;top:472.02px;font-size:12px;line-height:1;white-space:pre;color:#000;">10</div>
<div style="position:absolute;left:499.00px;top:472.02px;font-size:12px;line-height:1;white-space:pre;color:#000;letter-spacing:-0.381px;transform:scaleX(0.9295);transform-origin:0 0;">VX109454</div>
<div style="position:absolute;left:561.00px;top:472.02px;font-size:12px;line-height:1;white-space:pre;color:#000;">0</div>
<div style="position:absolute;left:608.60px;top:472.02px;font-size:12px;line-height:1;white-space:pre;color:#000;letter-spacing:-0.321px;transform:scaleX(0.9183);transform-origin:0 0;">Lukitusaluslevy</div>
<div style="position:absolute;left:869.70px;top:472.02px;font-size:12px;line-height:1;white-space:pre;color:#000;">16</div>
<div style="position:absolute;left:456px;top:580px;width:748px;height:148px;border:1px solid #8f949b;background:#fff;"></div>
<div style="position:absolute;left:458px;top:582px;width:1px;height:145px;background:#696969;"></div>
<div style="position:absolute;left:458px;top:582px;width:746px;height:1px;background:#696969;"></div>
<div style="position:absolute;left:459px;top:726px;width:745px;height:1px;background:#e3e3e3;"></div>
<div style="position:absolute;left:1203px;top:583px;width:1px;height:144px;background:#e3e3e3;"></div>
<div style="position:absolute;left:476px;top:607px;width:712px;height:16px;background:#dfe8fb;"></div>
<div style="position:absolute;left:476px;top:624px;width:712px;height:16px;background:#dfe8fb;"></div>
<div style="position:absolute;left:476px;top:641px;width:712px;height:16px;background:#dfe8fb;"></div>
<div style="position:absolute;left:476px;top:658px;width:712px;height:16px;background:#dfe8fb;"></div>
<div style="position:absolute;left:476px;top:675px;width:712px;height:16px;background:#dfe8fb;"></div>
<div style="position:absolute;left:476px;top:692px;width:712px;height:16px;background:#dfe8fb;"></div>
<div style="position:absolute;left:491px;top:584px;width:1px;height:23px;background:#e5e5e5;"></div>
<div style="position:absolute;left:559px;top:584px;width:1px;height:23px;background:#e5e5e5;"></div>
<div style="position:absolute;left:606px;top:584px;width:1px;height:23px;background:#e5e5e5;"></div>
<div style="position:absolute;left:678px;top:584px;width:1px;height:23px;background:#e5e5e5;"></div>
<div style="position:absolute;left:789px;top:584px;width:1px;height:23px;background:#e5e5e5;"></div>
<div style="position:absolute;left:824px;top:584px;width:1px;height:23px;background:#e5e5e5;"></div>
<div style="position:absolute;left:851px;top:584px;width:1px;height:23px;background:#e5e5e5;"></div>
<div style="position:absolute;left:1187px;top:584px;width:1px;height:23px;background:#e5e5e5;"></div>
<div style="position:absolute;left:492px;top:607px;width:1px;height:120px;background:#f0f0f0;"></div>
<div style="position:absolute;left:560px;top:607px;width:1px;height:120px;background:#f0f0f0;"></div>
<div style="position:absolute;left:607px;top:607px;width:1px;height:120px;background:#f0f0f0;"></div>
<div style="position:absolute;left:679px;top:607px;width:1px;height:120px;background:#f0f0f0;"></div>
<div style="position:absolute;left:790px;top:607px;width:1px;height:120px;background:#f0f0f0;"></div>
<div style="position:absolute;left:825px;top:607px;width:1px;height:120px;background:#f0f0f0;"></div>
<div style="position:absolute;left:852px;top:607px;width:1px;height:120px;background:#f0f0f0;"></div>
<div style="position:absolute;left:1188px;top:607px;width:1px;height:120px;background:#f0f0f0;"></div>
<div style="position:absolute;left:459px;top:623px;width:744px;height:1px;background:#f0f0f0;"></div>
<div style="position:absolute;left:459px;top:640px;width:744px;height:1px;background:#f0f0f0;"></div>
<div style="position:absolute;left:459px;top:657px;width:744px;height:1px;background:#f0f0f0;"></div>
<div style="position:absolute;left:459px;top:674px;width:744px;height:1px;background:#f0f0f0;"></div>
<div style="position:absolute;left:459px;top:691px;width:744px;height:1px;background:#f0f0f0;"></div>
<div style="position:absolute;left:459px;top:708px;width:744px;height:1px;background:#f0f0f0;"></div>
<div style="position:absolute;left:459px;top:725px;width:744px;height:1px;background:#f0f0f0;"></div>
<svg style="position:absolute;left:471.5px;top:583px;" width="9" height="5" viewBox="0 0 9 5"><path d="M0.5 4.5L4.5 0.5L8.5 4.5" fill="none" stroke="#6d6d6d"/></svg>
<div style="position:absolute;left:465.30px;top:589.42px;font-size:12px;line-height:1;white-space:pre;color:#000;letter-spacing:-0.662px;transform:scaleX(0.8991);transform-origin:0 0;">Nro</div>
<div style="position:absolute;left:498.50px;top:589.42px;font-size:12px;line-height:1;white-space:pre;color:#000;letter-spacing:-0.434px;transform:scaleX(0.9126);transform-origin:0 0;">Nimike</div>
<div style="position:absolute;left:566.00px;top:589.42px;font-size:12px;line-height:1;white-space:pre;color:#000;letter-spacing:-0.388px;transform:scaleX(0.9127);transform-origin:0 0;">Revisio</div>
<div style="position:absolute;left:613.00px;top:589.42px;font-size:12px;line-height:1;white-space:pre;color:#000;letter-spacing:-0.409px;transform:scaleX(0.9244);transform-origin:0 0;">Kuvaus</div>
<div style="position:absolute;left:685.40px;top:589.42px;font-size:12px;line-height:1;white-space:pre;color:#000;letter-spacing:-0.376px;transform:scaleX(0.9222);transform-origin:0 0;">Kuvaus 2</div>
<div style="position:absolute;left:796.00px;top:589.42px;font-size:12px;line-height:1;white-space:pre;color:#000;letter-spacing:-0.465px;transform:scaleX(0.8947);transform-origin:0 0;">Mitat</div>
<div style="position:absolute;left:829.00px;top:589.42px;font-size:12px;line-height:1;white-space:pre;color:#000;letter-spacing:-0.233px;transform:scaleX(0.9599);transform-origin:0 0;">Kpl</div>
<div style="position:absolute;left:857.60px;top:589.42px;font-size:12px;line-height:1;white-space:pre;color:#000;letter-spacing:-0.674px;transform:scaleX(0.9096);transform-origin:0 0;">Osa</div>
<svg style="position:absolute;left:462px;top:609px;" width="11" height="11" viewBox="0 0 11 11"><rect x="0.5" y="0.5" width="10" height="10" fill="#fff" stroke="#333"/><path d="M3 5.5H8M5.5 3V8" stroke="#000"/></svg>
<div style="position:absolute;left:480.50px;top:608.92px;font-size:12px;line-height:1;white-space:pre;color:#000;font-weight:bold;">1</div>
<div style="position:absolute;left:497.00px;top:608.92px;font-size:12px;line-height:1;white-space:pre;color:#000;font-weight:bold;letter-spacing:0.184px;">VX30000...</div>
<div style="position:absolute;left:565.00px;top:608.92px;font-size:12px;line-height:1;white-space:pre;color:#000;font-weight:bold;">0</div>
<div style="position:absolute;left:612.00px;top:608.92px;font-size:12px;line-height:1;white-space:pre;color:#000;font-weight:bold;letter-spacing:-0.094px;transform:scaleX(0.9814);transform-origin:0 0;">Runkolevy</div>
<div style="position:absolute;left:829.00px;top:608.92px;font-size:12px;line-height:1;white-space:pre;color:#000;font-weight:bold;">2</div>
<div style="position:absolute;left:856.00px;top:608.92px;font-size:12px;line-height:1;white-space:pre;color:#000;font-weight:bold;letter-spacing:0.250px;">VX3000090</div>
<svg style="position:absolute;left:462px;top:626px;" width="11" height="11" viewBox="0 0 11 11"><rect x="0.5" y="0.5" width="10" height="10" fill="#fff" stroke="#333"/><path d="M3 5.5H8M5.5 3V8" stroke="#000"/></svg>
<div style="position:absolute;left:480.50px;top:625.92px;font-size:12px;line-height:1;white-space:pre;color:#000;font-weight:bold;">2</div>
<div style="position:absolute;left:497.00px;top:625.92px;font-size:12px;line-height:1;white-space:pre;color:#000;font-weight:bold;letter-spacing:0.184px;">VX30000...</div>
<div style="position:absolute;left:565.00px;top:625.92px;font-size:12px;line-height:1;white-space:pre;color:#000;font-weight:bold;">0</div>
<div style="position:absolute;left:612.00px;top:625.92px;font-size:12px;line-height:1;white-space:pre;color:#000;font-weight:bold;letter-spacing:-0.259px;transform:scaleX(0.9456);transform-origin:0 0;">Akseli</div>
<div style="position:absolute;left:683.00px;top:625.92px;font-size:12px;line-height:1;white-space:pre;color:#000;font-weight:bold;letter-spacing:0.333px;">D60*158</div>
<div style="position:absolute;left:829.00px;top:625.92px;font-size:12px;line-height:1;white-space:pre;color:#000;font-weight:bold;">2</div>
<div style="position:absolute;left:856.00px;top:625.92px;font-size:12px;line-height:1;white-space:pre;color:#000;font-weight:bold;letter-spacing:0.250px;">VX3000091</div>
<svg style="position:absolute;left:462px;top:643px;" width="11" height="11" viewBox="0 0 11 11"><rect x="0.5" y="0.5" width="10" height="10" fill="#fff" stroke="#333"/><path d="M3 5.5H8M5.5 3V8" stroke="#000"/></svg>
<div style="position:absolute;left:480.50px;top:642.92px;font-size:12px;line-height:1;white-space:pre;color:#000;font-weight:bold;">3</div>
<div style="position:absolute;left:497.00px;top:642.92px;font-size:12px;line-height:1;white-space:pre;color:#000;font-weight:bold;letter-spacing:0.184px;">VX30000...</div>
<div style="position:absolute;left:565.00px;top:642.92px;font-size:12px;line-height:1;white-space:pre;color:#000;font-weight:bold;">0</div>
<div style="position:absolute;left:612.00px;top:642.92px;font-size:12px;line-height:1;white-space:pre;color:#000;font-weight:bold;letter-spacing:-0.285px;transform:scaleX(0.9492);transform-origin:0 0;">Pyörä</div>
<div style="position:absolute;left:683.00px;top:642.92px;font-size:12px;line-height:1;white-space:pre;color:#000;font-weight:bold;letter-spacing:0.662px;">D270(/300/65) ...</div>
<div style="position:absolute;left:829.00px;top:642.92px;font-size:12px;line-height:1;white-space:pre;color:#000;font-weight:bold;">2</div>
<div style="position:absolute;left:856.00px;top:642.92px;font-size:12px;line-height:1;white-space:pre;color:#000;font-weight:bold;letter-spacing:0.250px;">VX3000092</div>
<svg style="position:absolute;left:462px;top:660px;" width="11" height="11" viewBox="0 0 11 11"><rect x="0.5" y="0.5" width="10" height="10" fill="#fff" stroke="#333"/><path d="M3 5.5H8M5.5 3V8" stroke="#000"/></svg>
<div style="position:absolute;left:480.50px;top:659.92px;font-size:12px;line-height:1;white-space:pre;color:#000;font-weight:bold;">4</div>
<div style="position:absolute;left:497.00px;top:659.92px;font-size:12px;line-height:1;white-space:pre;color:#000;font-weight:bold;letter-spacing:0.184px;">VX30000...</div>
<div style="position:absolute;left:565.00px;top:659.92px;font-size:12px;line-height:1;white-space:pre;color:#000;font-weight:bold;">0</div>
<div style="position:absolute;left:612.00px;top:659.92px;font-size:12px;line-height:1;white-space:pre;color:#000;font-weight:bold;letter-spacing:-0.104px;transform:scaleX(0.9775);transform-origin:0 0;">Päätylevy</div>
<div style="position:absolute;left:829.00px;top:659.92px;font-size:12px;line-height:1;white-space:pre;color:#000;font-weight:bold;">2</div>
<div style="position:absolute;left:856.00px;top:659.92px;font-size:12px;line-height:1;white-space:pre;color:#000;font-weight:bold;letter-spacing:0.250px;">VX3000093</div>
<svg style="position:absolute;left:462px;top:677px;" width="11" height="11" viewBox="0 0 11 11"><rect x="0.5" y="0.5" width="10" height="10" fill="#fff" stroke="#333"/><path d="M3 5.5H8M5.5 3V8" stroke="#000"/></svg>
<div style="position:absolute;left:480.50px;top:676.92px;font-size:12px;line-height:1;white-space:pre;color:#000;font-weight:bold;">5</div>
<div style="position:absolute;left:497.00px;top:676.92px;font-size:12px;line-height:1;white-space:pre;color:#000;font-weight:bold;letter-spacing:0.184px;">VX30000...</div>
<div style="position:absolute;left:565.00px;top:676.92px;font-size:12px;line-height:1;white-space:pre;color:#000;font-weight:bold;">0</div>
<div style="position:absolute;left:612.00px;top:676.92px;font-size:12px;line-height:1;white-space:pre;color:#000;font-weight:bold;letter-spacing:-0.111px;transform:scaleX(0.9690);transform-origin:0 0;">Kiinnitysl...</div>
<div style="position:absolute;left:829.00px;top:676.92px;font-size:12px;line-height:1;white-space:pre;color:#000;font-weight:bold;">1</div>
<div style="position:absolute;left:856.00px;top:676.92px;font-size:12px;line-height:1;white-space:pre;color:#000;font-weight:bold;letter-spacing:0.250px;">VX3000094</div>
<svg style="position:absolute;left:462px;top:694px;" width="11" height="11" viewBox="0 0 11 11"><rect x="0.5" y="0.5" width="10" height="10" fill="#fff" stroke="#333"/><path d="M3 5.5H8M5.5 3V8" stroke="#000"/></svg>
<div style="position:absolute;left:480.50px;top:693.92px;font-size:12px;line-height:1;white-space:pre;color:#000;font-weight:bold;">6</div>
<div style="position:absolute;left:497.00px;top:693.92px;font-size:12px;line-height:1;white-space:pre;color:#000;font-weight:bold;letter-spacing:0.184px;">VX30000...</div>
<div style="position:absolute;left:565.00px;top:693.92px;font-size:12px;line-height:1;white-space:pre;color:#000;font-weight:bold;">0</div>
<div style="position:absolute;left:612.00px;top:693.92px;font-size:12px;line-height:1;white-space:pre;color:#000;font-weight:bold;letter-spacing:-0.045px;transform:scaleX(0.9881);transform-origin:0 0;">Lukitusla...</div>
<div style="position:absolute;left:829.00px;top:693.92px;font-size:12px;line-height:1;white-space:pre;color:#000;font-weight:bold;">4</div>
<div style="position:absolute;left:856.00px;top:693.92px;font-size:12px;line-height:1;white-space:pre;color:#000;font-weight:bold;letter-spacing:0.250px;">VX3000095</div>
<div style="position:absolute;left:944px;top:741px;width:77px;height:19px;border:1px solid #adadad;background:#e1e1e1;"></div>
<div style="position:absolute;left:975.00px;top:746.52px;font-size:12px;line-height:1;white-space:pre;color:#000;letter-spacing:-0.544px;transform:scaleX(0.9533);transform-origin:0 0;">OK</div>
<div style="position:absolute;left:1035px;top:741px;width:77px;height:19px;border:1px solid #adadad;background:#e1e1e1;"></div>
<div style="position:absolute;left:1056.60px;top:746.52px;font-size:12px;line-height:1;white-space:pre;color:#000;letter-spacing:-0.480px;transform:scaleX(0.8990);transform-origin:0 0;">Peruuta</div>
<div style="position:absolute;left:1126px;top:741px;width:77px;height:19px;border:1px solid #adadad;background:#e1e1e1;"></div>
<div style="position:absolute;left:1153.20px;top:746.52px;font-size:12px;line-height:1;white-space:pre;color:#000;letter-spacing:-0.393px;transform:scaleX(0.9311);transform-origin:0 0;">Ohje</div>
<svg style="position:absolute;left:0;top:0" width="1234" height="140" viewBox="0 0 1234 140"><path d="M8 2.8L15.8 6.9V14.9L8 19L0.2 14.9V6.9Z" fill="#0b5ba3"/><text x="8" y="14" font-family="Liberation Sans" font-weight="bold" font-size="8.3" fill="#fff" text-anchor="middle" letter-spacing="-0.3">G4</text><rect x="23" y="5" width="1" height="12" fill="#8a8a8a"/><path d="M34 5H48V19H34Z" fill="#8fa2c2"/><rect x="36" y="6.5" width="10" height="5" fill="#e9eef7"/><rect x="37" y="14" width="8" height="5" fill="#e9eef7"/><rect x="40" y="15" width="2" height="3" fill="#8fa2c2"/><path d="M57 8.5Q66 3 70 9Q72.5 14 68 19.5" fill="none" stroke="#8fa2c2" stroke-width="2.6"/><path d="M55 5V12H62Z" fill="#8fa2c2"/><path d="M75 10.5H80L77.5 13Z" fill="#999"/><path d="M101 8.5Q92 3 88 9Q85.5 14 90 19.5" fill="none" stroke="#8fa2c2" stroke-width="2.6"/><path d="M103 5V12H96Z" fill="#8fa2c2"/><path d="M106.5 10.5H111.5L109 13Z" fill="#999"/><path d="M120 6.5Q126 3.5 132.3 6.5L131 17.5Q126 20 121 17.5Z" fill="#c5d1e4"/><ellipse cx="126.1" cy="6.5" rx="6.1" ry="1.8" fill="#d7e0ee"/><circle cx="130" cy="14.7" r="5.9" fill="#fff" fill-opacity="0.9"/><rect x="129" y="9.299999999999999" width="2" height="2.4" fill="#8094b5" transform="rotate(0 130 14.7)"/><rect x="129" y="9.299999999999999" width="2" height="2.4" fill="#8094b5" transform="rotate(45 130 14.7)"/><rect x="129" y="9.299999999999999" width="2" height="2.4" fill="#8094b5" transform="rotate(90 130 14.7)"/><rect x="129" y="9.299999999999999" width="2" height="2.4" fill="#8094b5" transform="rotate(135 130 14.7)"/><rect x="129" y="9.299999999999999" width="2" height="2.4" fill="#8094b5" transform="rotate(180 130 14.7)"/><rect x="129" y="9.299999999999999" width="2" height="2.4" fill="#8094b5" transform="rotate(225 130 14.7)"/><rect x="129" y="9.299999999999999" width="2" height="2.4" fill="#8094b5" transform="rotate(270 130 14.7)"/><rect x="129" y="9.299999999999999" width="2" height="2.4" fill="#8094b5" transform="rotate(315 130 14.7)"/><circle cx="130" cy="14.7" r="3.7" fill="#8094b5"/><circle cx="130" cy="14.7" r="2" fill="#d5deee"/><rect x="141.5" y="4.5" width="13" height="12" fill="#e8eef8" stroke="#9aabc8"/><rect x="141" y="4" width="14" height="3.5" fill="#9aabc8"/><circle cx="151.9" cy="14.7" r="5.9" fill="#fff" fill-opacity="0.9"/><rect x="150.9" y="9.299999999999999" width="2" height="2.4" fill="#8094b5" transform="rotate(0 151.9 14.7)"/><rect x="150.9" y="9.299999999999999" width="2" height="2.4" fill="#8094b5" transform="rotate(45 151.9 14.7)"/><rect x="150.9" y="9.299999999999999" width="2" height="2.4" fill="#8094b5" transform="rotate(90 151.9 14.7)"/><rect x="150.9" y="9.299999999999999" width="2" height="2.4" fill="#8094b5" transform="rotate(135 151.9 14.7)"/><rect x="150.9" y="9.299999999999999" width="2" height="2.4" fill="#8094b5" transform="rotate(180 151.9 14.7)"/><rect x="150.9" y="9.299999999999999" width="2" height="2.4" fill="#8094b5" transform="rotate(225 151.9 14.7)"/><rect x="150.9" y="9.299999999999999" width="2" height="2.4" fill="#8094b5" transform="rotate(270 151.9 14.7)"/><rect x="150.9" y="9.299999999999999" width="2" height="2.4" fill="#8094b5" transform="rotate(315 151.9 14.7)"/><circle cx="151.9" cy="14.7" r="3.7" fill="#8094b5"/><circle cx="151.9" cy="14.7" r="2" fill="#d5deee"/><rect x="163.8" y="9.8" width="7.3" height="1.1" fill="#111"/><path d="M164.8 12.2H170.2L167.5 15.5Z" fill="#111"/><rect x="179" y="5" width="1" height="12" fill="#8a8a8a"/><rect x="13" y="58" width="24" height="25" rx="1" fill="#c9d5e7"/><rect x="18" y="56" width="14" height="5" rx="1" fill="#8fa2c2"/><rect x="23" y="54" width="4" height="3" fill="#8fa2c2"/><path d="M27.5 66.5H37L40.5 70V84.5H27.5Z" fill="#e9eef7" stroke="#8fa2c2"/><path d="M57 63L61 72M62 63L58 72" stroke="#5f7399" stroke-width="1.2"/><circle cx="57" cy="74.5" r="2.2" fill="none" stroke="#5f7399" stroke-width="1.1"/><circle cx="62" cy="74.5" r="2.2" fill="none" stroke="#5f7399" stroke-width="1.1"/><path d="M52.5 92.5H58.5L60.5 94.5V101.5H52.5Z" fill="#fff" stroke="#5f7399"/><path d="M57.5 96.5H64L66.5 99V105.5H57.5Z" fill="#fff" stroke="#5f7399"/><path d="M54 95.5H57M54 97.5H56M54 99.5H56M59 99.5H64.5M59 101.5H64.5M59 103.5H64.5" stroke="#5f7399" stroke-width="0.9"/><rect x="92.5" y="59.5" width="20" height="20" fill="#e9eef7" stroke="#8fa2c2"/><path d="M95.5 69.5H109.5M102.5 62.5V76.5" stroke="#9aabc8" stroke-width="4.6"/><path d="M148.7 59.6H163.5V64.4H154.3V73.4H163.5V78.2H148.7Z" fill="#d3ddec" stroke="#a3b3cd"/><path d="M143.5 78.7H155.5M149.7 72.5V84.5" stroke="#f3f4f6" stroke-width="5.5"/><path d="M145 78.7H154M149.7 74V83" stroke="#97a8c4" stroke-width="2.8"/><circle cx="197" cy="70" r="10.3" fill="none" stroke="#b5c2d8" stroke-dasharray="2.5 3.4" stroke-width="0.8"/><path d="M193.7 62.3V57.6H200.3V62.3H198.5V59.6H195.5V62.3Z" fill="#d3ddec" stroke="#a3b3cd"/><path d="M193.7 77.5V82.5H200.3V77.5H198.5V80.3H195.5V77.5Z" fill="#d3ddec" stroke="#a3b3cd"/><path d="M189.5 66.5H184.7V73.3H189.5V71.3H186.8V68.5H189.5Z" fill="#d3ddec" stroke="#a3b3cd"/><path d="M204.5 66.5H209.5V73.3H204.5V71.3H207.2V68.5H204.5Z" fill="#d3ddec" stroke="#a3b3cd"/><rect x="237" y="59" width="14" height="5" fill="#c9d5e7"/><path d="M237 69H241V73H246V69H251V77H237Z" fill="#c9d5e7"/><rect x="239.5" y="60" width="5.5" height="4.5" fill="none" stroke="#5f7399" stroke-width="1.2"/><path d="M240.5 60V58.5Q242.2 56.5 244 58.5V60" fill="none" stroke="#5f7399"/><path d="M250 67L262.5 80" stroke="#5f7399" stroke-width="3.5"/><path d="M250 67L252.5 69.7" stroke="#fff" stroke-width="2"/><path d="M260 77.4L262.5 80" stroke="#fff" stroke-width="2"/><path d="M256 62L259 65M259 62L256 65" stroke="#5f7399" stroke-width="0.9"/><path d="M257.5 66L258.5 68L260.5 69L258.5 70L257.5 72L256.5 70L254.5 69L256.5 68Z" fill="#5f7399"/><path d="M261.5 69L262.3 70.5L264 71.5L262.3 72.5L261.5 74L260.7 72.5L259 71.5L260.7 70.5Z" fill="#5f7399"/><circle cx="261.5" cy="65.5" r="1.4" fill="#8fa2c2"/><path d="M282 59.5H304M282 80.5H304M292.5 64V76" stroke="#5f7399" stroke-width="1.3"/><path d="M292.5 60.5L288 65H297Z" fill="#5f7399"/><path d="M292.5 79.5L288 75H297Z" fill="#5f7399"/><path d="M334 69.5H356M344.5 58V64M344.5 75V81" stroke="#5f7399" stroke-width="1.2"/><path d="M344.5 68L340.5 63.3H348.5Z" fill="#5f7399"/><path d="M344.5 71L340.5 75.5H348.5Z" fill="#5f7399"/><path d="M380 74.3H391M384.3 65V67.2L380.5 74M384.5 69.3Q387.5 71 388.2 74" fill="none" stroke="#5f7399" stroke-width="1.1"/><circle cx="407.5" cy="69.4" r="6.2" fill="none" stroke="#5f7399" stroke-width="1.1"/><circle cx="407.5" cy="69.4" r="4.2" fill="none" stroke="#5f7399" stroke-width="1.1"/><path d="M406.5 69.4H408.5M407.5 68.4V70.4" stroke="#5f7399" stroke-width="0.9"/><circle cx="431.3" cy="71" r="4.2" fill="none" stroke="#5f7399" stroke-width="1.1"/><path d="M424 74L429 69M428 70.5L434 64.3" stroke="#5f7399" stroke-width="1.1"/><path d="M451.3 64V75.8M446.3 65L449.7 69.7L446.3 74.3M456.5 65L453 69.7L456.5 74.3" fill="none" stroke="#5f7399" stroke-width="1.1"/><path d="M380.5 93V103.5H391M380.5 99.5H384.5V103.5" fill="none" stroke="#5f7399" stroke-width="1.1"/><path d="M402 94.5H413M402 102.5H413M403.5 98.5H411.5" fill="none" stroke="#5f7399" stroke-width="1.1"/><path d="M402 98.5L404.5 96.5V100.5Z M413 98.5L410.5 96.5V100.5Z" fill="#5f7399"/><path d="M425 95.5H435M425 101.5H435" fill="none" stroke="#5f7399" stroke-width="1.1"/><path d="M424 95.5L426.5 93.5V97.5Z M436 95.5L433.5 93.5V97.5Z M424 101.5L426.5 99.5V103.5Z M436 101.5L433.5 99.5V103.5Z" fill="#5f7399"/><path d="M446.3 104.5L458 92.8" stroke="#5f7399" stroke-width="1.1"/><circle cx="452.3" cy="98.5" r="3.3" fill="none" stroke="#5f7399" stroke-width="1.1"/><circle cx="452.3" cy="98.5" r="1.4" fill="#5f7399"/><circle cx="494.7" cy="69.7" r="11.5" fill="#56698f"/><text x="494.7" y="73.5" font-family="Liberation Sans" font-size="9.5" fill="#fff" text-anchor="middle" letter-spacing="-0.6">10,0</text><path d="M524.5 61.5H534.5V66H529.5V73.5H534.5V77.5H524.5Z" fill="#c9d5e7" stroke="#a7b6cf"/><path d="M544.5 61.5H549.5V77.5H544.5V72.5H539.5V66H544.5Z" fill="#c9d5e7" stroke="#a7b6cf"/><path d="M535 61.5H544M535 77.5H544" stroke="#a7b6cf" stroke-dasharray="1 1.2"/><rect x="576" y="57.2" width="16.8" height="15.5" fill="#aab9d2"/><path d="M569 74L580.5 62H587L575 74.5Z" fill="#dce5f2" stroke="#5f7399" stroke-width="0.8"/><path d="M575 74.5L587 62L588 67L574.5 82Z" fill="#c3cfe2" stroke="#5f7399" stroke-width="0.6"/><path d="M567 74H574V76.5H571.8V80.5H574V82.6H567V80.5H569.2V76.5H567Z" fill="#5f7399"/><path d="M608 62.5H622.3V80.5H626.5M622.5 67.3H638M630.5 62.5V67M631.5 80.5H638" fill="none" stroke="#5f7399" stroke-width="1.2"/><path d="M638 67.3H622.5" stroke="#5f7399" stroke-width="1.7"/><path d="M611 59V66L615.2 62.5Z M619.5 59V66L615.3 62.5Z" fill="#5f7399"/><circle cx="630.5" cy="60.3" r="2.2" fill="#fff" stroke="#5f7399" stroke-width="1"/><ellipse cx="622.3" cy="73.2" rx="3.3" ry="2.6" fill="#fff" stroke="#5f7399" stroke-width="1.1"/><path d="M619 73.2H625.6" stroke="#5f7399" stroke-width="0.9"/><path d="M627.3 78.3V82.8M631.2 78.3V82.8" stroke="#5f7399" stroke-width="1.6"/><rect x="669.5" y="55.5" width="20" height="28" fill="#eaf0fa" stroke="#c5d1e5"/><rect x="679" y="60" width="2.2" height="2.2" fill="#5f7399"/><path d="M676 64H681.5V70.5H684V72H676V70.5H678.5V65.5H676Z" fill="#5f7399"/><path d="M672 75.3H674.5M676 75.3H687M672 77.4H674.5M676 77.4H687M672 79.4H674.5M676 79.4H687" stroke="#7d8fb0" stroke-width="0.9"/><rect x="733.5" y="59.5" width="27" height="21" fill="#e6edf8" stroke="#c3cfe3"/><path d="M734 62.4H760M734 65.4H760M734 68.5H760M734 71.5H760M734 74.5H760M734 77.6H760M737.5 60V80M754.5 60V80" stroke="#c9d4e6" stroke-width="0.9"/><path d="M787.5 71V61.5L790.5 58.2H814V68.3M787.5 61.5H810.5V71M810.5 61.5L814 58.2M790.5 58.2V68.3" fill="none" stroke="#c3cfe3" stroke-width="0.9"/><path d="M787.5 71.5L790.5 68.3H814L810.5 71.5Z" fill="#aebcd3" stroke="#9aabc6" stroke-width="0.8"/><path d="M810.5 71.5L814 68.3V77.5L810.5 80.7Z" fill="#aebcd3" stroke="#9aabc6" stroke-width="0.8"/><rect x="787.5" y="71.5" width="23" height="9.2" fill="#bdc9dc" stroke="#9aabc6" stroke-width="0.9"/><rect x="835" y="59" width="22" height="21" rx="2.5" fill="#97a8c4"/><path d="M841 67H851M841 72H851" stroke="#fff" stroke-width="2"/><rect x="879.5" y="56.5" width="18.5" height="15.5" fill="#c3cfe2" stroke="#a9b8d0"/><path d="M884 65H892V69M884 65V70" fill="none" stroke="#b3c1d8" stroke-width="1"/><circle cx="892.2" cy="68.8" r="10.3" fill="#d3dae6" fill-opacity="0.8" stroke="#5f7399" stroke-width="1.2"/><path d="M884 67H892V73" fill="none" stroke="#bac6da" stroke-width="1"/><path d="M899.5 76.5L906.5 84.5" stroke="#5f7399" stroke-width="2"/><rect x="932" y="59" width="22" height="21.5" rx="3.5" fill="#7c8eb0"/><path d="M941 62.5H945.3L944.2 72.5H942.1Z" fill="#eef2f8"/><ellipse cx="943.1" cy="76.3" rx="2" ry="1.6" fill="#eef2f8"/><path d="M1005.5 56.5H1015.5V60.5H1010.5V68.5H1015.5V72.5H1005.5Z" fill="#d3ddec" stroke="#a9b8d0"/><path d="M1017.5 59.5H1022.5V75.5H1017.5V70H1012.5V64.5H1017.5Z" fill="#d3ddec" stroke="#a9b8d0"/><rect x="1012.5" y="68.5" width="3" height="2" fill="none" stroke="#8a9cbb"/><rect x="995" y="74" width="10" height="10" fill="#7d90b0"/><rect x="999" y="75.3" width="2" height="5.2" fill="#fff"/><rect x="999" y="81.3" width="2" height="1.8" fill="#fff"/><path d="M1068.5 56.5H1078.5V60.5H1073.5V68.5H1078.5V72.5H1068.5Z" fill="#d3ddec" stroke="#a9b8d0"/><path d="M1080.5 59.5H1085.5V75.5H1080.5V70H1075.5V64.5H1080.5Z" fill="#d3ddec" stroke="#a9b8d0"/><rect x="1075.5" y="68.5" width="3" height="2" fill="none" stroke="#8a9cbb"/><rect x="1058" y="74" width="10" height="10" fill="#7d90b0"/><rect x="1062" y="75.3" width="2" height="5.2" fill="#fff"/><rect x="1062" y="81.3" width="2" height="1.8" fill="#fff"/><path d="M1058 61H1068M1063 56V66" stroke="#5f7399" stroke-width="1.3"/><path d="M1056.5 61L1059 58.5V63.5Z M1069.5 61L1067 58.5V63.5Z M1063 54.5L1060.5 57H1065.5Z M1063 67.5L1060.5 65H1065.5Z" fill="#5f7399"/><path d="M1058 72.5H1068" stroke="#8fa2c2" stroke-dasharray="1 1" stroke-width="0.8"/><path d="M1127.5 63V81M1150.5 63V81M1131 68.5H1147" stroke="#5f7399" stroke-width="1.1"/><path d="M1128.3 68.5L1132.3 65.3V71.7Z M1149.7 68.5L1145.7 65.3V71.7Z" fill="#5f7399"/><text x="1139.3" y="64.3" font-family="Liberation Sans" font-size="7.8" fill="#7b8db0" text-anchor="middle">45</text><text x="1181.3" y="80.4" font-family="Liberation Serif" font-size="30.5" fill="#5d6f94" text-anchor="middle">T</text><rect x="1208.5" y="64.5" width="30" height="11" fill="#e3ebf7" stroke="#8a9bbb"/><path d="M1212.5 65V69M1215.5 65V67.5M1218.5 65V69M1221.5 65V67.5M1224.5 65V69M1227.5 65V67.5M1230.5 65V69M1233.5 65V67.5" stroke="#7384a6" stroke-width="0.9"/></svg>
</body></html>
